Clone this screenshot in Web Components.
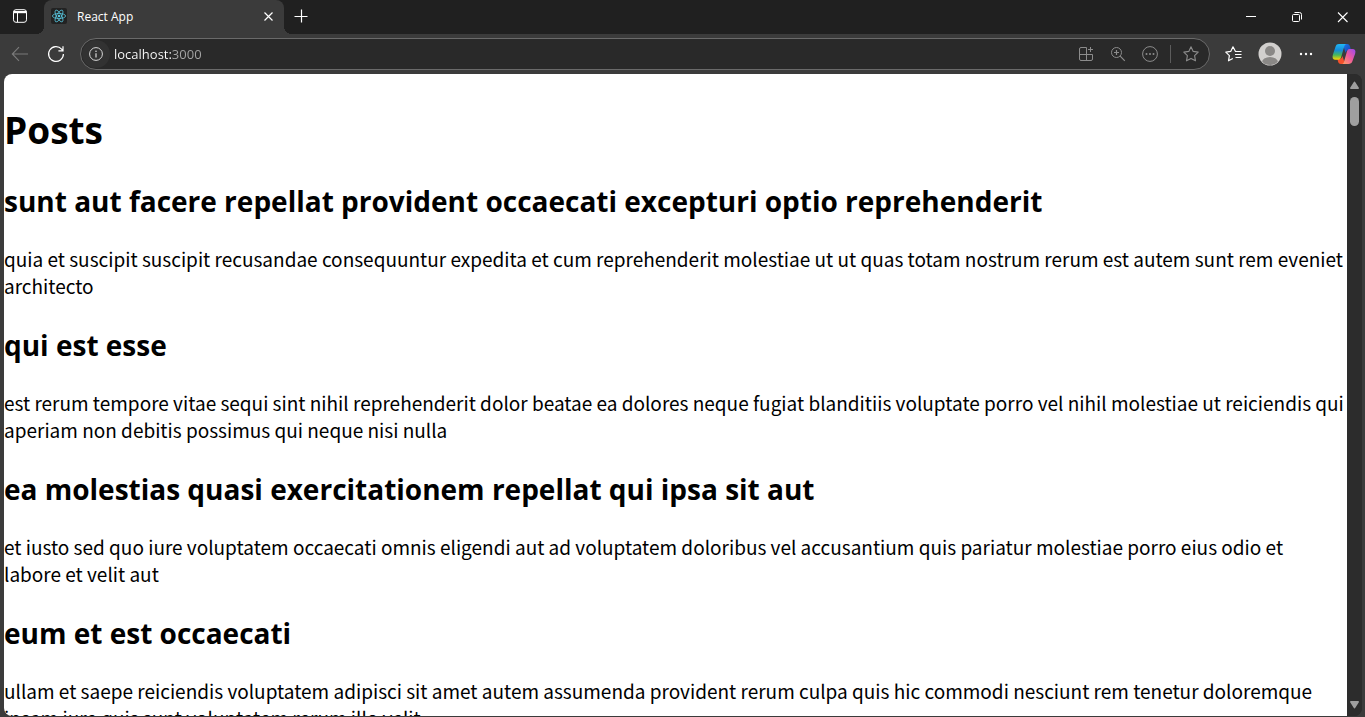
<!DOCTYPE html>
<html lang="en">
<head>
<meta charset="utf-8">
<meta name="viewport" content="width=device-width, initial-scale=1">
<title>React App</title>
<style>
html, body { margin: 0; height: 100%; }
body { font-family: "Open Sans", "Noto Sans", sans-serif; background: #3b3b3b; overflow: hidden; }
</style>
</head>
<body>
<browser-window>
  <tab-strip slot="tabs"><browser-tab>React App</browser-tab></tab-strip>
  <nav-toolbar slot="toolbar" address="localhost:3000"></nav-toolbar>
  <posts-page>
    <post-item><span slot="title">sunt aut facere repellat provident occaecati excepturi optio reprehenderit</span>quia et suscipit suscipit recusandae consequuntur expedita et cum reprehenderit molestiae ut ut quas totam nostrum rerum est autem sunt rem eveniet architecto</post-item>
    <post-item><span slot="title">qui est esse</span>est rerum tempore vitae sequi sint nihil reprehenderit dolor beatae ea dolores neque fugiat blanditiis voluptate porro vel nihil molestiae ut reiciendis qui aperiam non debitis possimus qui neque nisi nulla</post-item>
    <post-item><span slot="title">ea molestias quasi exercitationem repellat qui ipsa sit aut</span>et iusto sed quo iure voluptatem occaecati omnis eligendi aut ad voluptatem doloribus vel accusantium quis pariatur molestiae porro eius odio et <br>labore et velit aut</post-item>
    <post-item><span slot="title">eum et est occaecati</span>ullam et saepe reiciendis voluptatem adipisci sit amet autem assumenda provident rerum culpa quis hic commodi nesciunt rem tenetur doloremque ipsam iure quis sunt voluptatem rerum illo velit</post-item>
  </posts-page>
  <scroll-track slot="scroll"></scroll-track>
</browser-window>

<script>
const define = (name, html, setup) => customElements.define(name, class extends HTMLElement {
  constructor() {
    super();
    this.attachShadow({ mode: 'open' }).innerHTML = html;
  }
  connectedCallback() { if (setup) setup(this, this.shadowRoot); }
});

const buttonReset = `
  button { border: 0; padding: 0; margin: 0; background: none; color: inherit; display: grid; place-items: center; flex: none; }
  svg { display: block; fill: none; stroke: currentColor; }
`;

define('browser-window', `
  <style>
    :host { display: flex; flex-direction: column; height: 100vh; background: #3b3b3b; }
    main { flex: 1; min-height: 0; display: flex; margin: 0 3px 1px 4px; border-radius: 8px; overflow: hidden; background: #2c2c2c; }
  </style>
  <slot name="tabs"></slot>
  <slot name="toolbar"></slot>
  <main><slot></slot><slot name="scroll"></slot></main>`);

define('tab-strip', `
  <style>
    ${buttonReset}
    :host { display: flex; height: 34px; background: #202020; color: #fff; flex: none; }
    .menu { width: 40px; height: 32px; }
    .new { width: 34px; height: 32px; }
    .controls { display: flex; margin-left: auto; }
    .controls button { width: 46px; height: 34px; }
    ::slotted(browser-tab) { margin-left: 4px; }
  </style>
  <button class="menu" aria-label="Tab actions"><svg width="16" height="16" viewBox="0 0 16 16"><rect x="1.5" y="1.7" width="13" height="12.6" rx="2.5"/><path d="M1.5 3h13v2.2h-13z" fill="currentColor" stroke="none"/><path d="M5.5 5v9"/></svg></button>
  <slot></slot>
  <button class="new" aria-label="New tab"><svg width="14" height="14" viewBox="0 0 14 14"><path d="M7.5 .5v13M.5 7.5h13" stroke-width="1.2"/></svg></button>
  <div class="controls">
    <button aria-label="Minimize"><svg width="12" height="10"><path d="M2 4.500h10"/></svg></button>
    <button aria-label="Restore"><svg width="12" height="12" viewBox="0 0 12 12"><rect x="2.500" y="3.5" width="7" height="7" rx="1"/><path d="M4.500 1.500h5a2 2 0 0 1 2 2v5"/></svg></button>
    <button aria-label="Close"><svg width="12" height="12" viewBox="0 0 12 12"><path d="m2 1.500 9.500 9.500M11.500 1.500 2 11" stroke-width="1.1"/></svg></button>
  </div>`);

define('browser-tab', `
  <style>
    ${buttonReset}
    :host { position: relative; display: flex; align-items: center; box-sizing: border-box; width: 240px; height: 34px; padding: 0 8px 2px 7px; border-radius: 8px 8px 0 0; background: #3b3b3b; color: #fff; font-size: 12px; }
    :host::before, :host::after { content: ""; position: absolute; bottom: 0; width: 8px; height: 8px; }
    :host::before { right: 100%; background: radial-gradient(circle at 0 0, transparent 8px, #3b3b3b 8px); }
    :host::after { left: 100%; background: radial-gradient(circle at 100% 0, transparent 8px, #3b3b3b 8px); }
    .icon { background: #222; border-radius: 2px; color: #58c4dc; margin-right: 10px; }
    .title { flex: 1; white-space: nowrap; }
    button { width: 16px; height: 16px; }
  </style>
  <svg class="icon" width="16" height="16" viewBox="-8 -8 16 16" stroke-width=".8"><circle r="1.3" fill="currentColor" stroke="none"/><ellipse rx="6.6" ry="2.5"/><ellipse rx="6.6" ry="2.5" transform="rotate(60)"/><ellipse rx="6.6" ry="2.5" transform="rotate(120)"/></svg>
  <span class="title"><slot></slot></span>
  <button aria-label="Close tab"><svg width="10" height="10"><path d="m1.500 1.500 8 8M9.500 1.500l-8 8" stroke-width="1.2"/></svg></button>`);

define('nav-toolbar', `
  <style>
    ${buttonReset}
    :host { display: flex; align-items: center; height: 40px; color: #fff; flex: none; }
    .nav { width: 32px; height: 32px; margin-left: 4px; }
    .back { color: #7b7b7b; }
    form { flex: 1; min-width: 0; display: flex; align-items: center; box-sizing: border-box; height: 32px; margin-left: 8px; padding: 0 2px 0 1px; border: 1px solid #6a6a6a; border-radius: 16px; background: #292929; }
    .info { width: 28px; height: 28px; border-radius: 50%; background: #323232; color: #d8d8d8; }
    input { flex: 1; min-width: 0; height: 24px; margin: 0 0 0 4px; padding: 0; border: 0; outline: 0; font: 13px "Open Sans", "Noto Sans", sans-serif; color: transparent; background: linear-gradient(90deg, #fff 57px, #a6a6a6 57px); -webkit-background-clip: text; background-clip: text; }
    .act { width: 32px; height: 28px; color: #8c8c8c; }
    .rule { width: 1px; height: 18px; margin: 0 4px; background: #5c5c5c; }
    .tools { display: flex; margin: 0 5px 0 8px; gap: 4px; }
    .tools button { width: 32px; height: 32px; }
    .tools button:last-child { margin-left: 2px; }
  </style>
  <button class="nav back" aria-label="Back"><svg width="18" height="16" viewBox="0 0 18 16"><path d="M17 8H1.5M8 1.2 1.3 8 8 14.8" stroke-width="1.1"/></svg></button>
  <button class="nav" aria-label="Refresh"><svg width="18" height="18" viewBox="0 0 18 18"><path d="M16.4 9A7.4 7.4 0 1 1 14.6 4.2L16 5.8M16 1.2v4.7h-4.6" stroke-width="1.2"/></svg></button>
  <form>
    <button type="button" class="info" aria-label="Site information"><svg width="14" height="14" viewBox="0 0 14 14"><circle cx="7" cy="7" r="6.4"/><path d="M7 6.2v4.2" stroke-width="1.2"/><circle cx="7" cy="4.2" r=".8" fill="currentColor" stroke="none"/></svg></button>
    <input type="text" aria-label="Address" spellcheck="false">
    <button type="button" class="act" aria-label="Apps"><svg width="16" height="16" viewBox="0 0 16 16"><path d="M8.500 1.500H3A1.500 1.500 0 0 0 1.500 3v10A1.500 1.500 0 0 0 3 14.500h10a1.500 1.500 0 0 0 1.500-1.500V8.500h-13M8.500 1.500v13M12.500 1v5M10 3.500h5"/></svg></button>
    <button type="button" class="act" aria-label="Zoom"><svg width="16" height="16" viewBox="0 0 16 16"><circle cx="6.500" cy="6.500" r="5"/><path d="m10.200 10.200 4.600 4.600M6.500 4v5M4 6.500h5" stroke-width="1.2"/></svg></button>
    <button type="button" class="act" aria-label="More actions"><svg width="16" height="16" viewBox="0 0 16 16"><circle cx="8" cy="8" r="7.400"/><g fill="currentColor" stroke="none"><circle cx="4.500" cy="8" r="1"/><circle cx="8" cy="8" r="1"/><circle cx="11.500" cy="8" r="1"/></g></svg></button>
    <span class="rule"></span>
    <button type="button" class="act" aria-label="Add to favorites"><svg width="16" height="16" viewBox="0 0 16 16"><path d="m8 .8 2.200 4.600 5 .7-3.600 3.500.9 5.200L8 12.400l-4.500 2.400.9-5.200L.8 6.100l5-.7z" stroke-linejoin="round" stroke-width="1.100"/></svg></button>
  </form>
  <div class="tools">
    <button aria-label="Favorites"><svg width="18" height="16" viewBox="0 0 18 16" stroke-width="1.2"><path d="M16.500 5.500h-6L8 .8 5.700 5.400l-4.900.7 3.600 3.500-.9 5.200 4.300-2.300M10 8.500h6.500M10.500 11.500h6" stroke-linejoin="round"/></svg></button>
    <button aria-label="Profile"><svg width="24" height="24" viewBox="0 0 24 24" style="stroke:none"><defs><clipPath id="face"><circle cx="12" cy="12" r="11"/></clipPath></defs><circle cx="12" cy="12" r="11.500" fill="#d2d0ce"/><g clip-path="url(#face)" fill="#8a8886"><circle cx="12" cy="9" r="5"/><ellipse cx="12" cy="20.500" rx="8" ry="5.500"/></g></svg></button>
    <button aria-label="Settings"><svg width="14" height="4" style="stroke:none;fill:currentColor"><circle cx="2" cy="2" r="1.200"/><circle cx="7" cy="2" r="1.200"/><circle cx="12" cy="2" r="1.200"/></svg></button>
    <button aria-label="Copilot"><svg width="24" height="22" viewBox="0 0 24 22" style="stroke:none">
      <defs>
        <linearGradient id="a" x1="0" y1="0" x2="0" y2="1"><stop offset="0" stop-color="#20b8f5"/><stop offset=".4" stop-color="#168bd8"/><stop offset=".7" stop-color="#48b65a"/><stop offset="1" stop-color="#ffd500"/></linearGradient>
        <linearGradient id="b" x1="1" y1="0" x2="0" y2="1"><stop offset="0" stop-color="#9a48ef"/><stop offset=".5" stop-color="#ef5b9b"/><stop offset="1" stop-color="#ffa45c"/></linearGradient>
        <linearGradient id="c" x1="0" y1="0" x2="1" y2="1"><stop offset="0" stop-color="#1c75e8"/><stop offset="1" stop-color="#173eb0"/></linearGradient>
      </defs>
      <path d="M11 1h4c2 0 2.500 1 3 2.500L19 7h-2c-2 0-3 1-3.500 3z" fill="url(#c)"/>
      <path d="M13 21H9c-2 0-2.500-1-3-2.500L5.500 16H7c2 0 3-1 3.500-3z" fill="#f4512c"/>
      <path d="M7 1h7.500c-1.200.2-1.800 1-2.200 2.300L9.200 14c-.6 2-1.500 2.700-3.200 2.700H3.500C1 16.700 0 15 .8 12L3.500 3.700C4.200 1.700 5.200 1 7 1z" fill="url(#a)"/>
      <path d="M16.500 21H10c1.200-.2 1.600-1 2-2.300l3-10.400C15.600 6.500 16.500 6 18 6h2.500c2.500 0 3.500 1.500 2.700 4.500L20.500 18c-.8 2.200-2 3-4 3z" fill="url(#b)"/>
    </svg></button>
  </div>`,
  (host, root) => { root.querySelector('input').value = host.getAttribute('address'); });

define('posts-page', `
  <style>
    :host { display: block; flex: 1; min-width: 0; overflow: hidden; background: #fff; color: #000; }
    h1 { margin: 29px 0 25px; font-size: 37px; line-height: 53px; font-weight: 700; }
  </style>
  <h1>Posts</h1>
  <slot></slot>`);

define('post-item', `
  <style>
    :host { display: block; }
    h2 { margin: 0 0 24px; font-size: 28px; line-height: 40px; font-weight: 700; }
    p { margin: 0 0 26px; font-family: "Noto Sans CJK SC", "Open Sans", sans-serif; font-size: 19px; line-height: 27px; }
  </style>
  <h2><slot name="title"></slot></h2>
  <p><slot></slot></p>`);

define('scroll-track', `
  <style>
    :host { display: flex; flex-direction: column; align-items: center; width: 15px; flex: none; background: #2c2c2c; color: #9f9f9f; box-sizing: border-box; padding: 7px 0; }
    svg { display: block; fill: currentColor; }
    .thumb { width: 9px; height: 29px; margin: 8px 0 auto; border-radius: 5px; background: #9f9f9f; }
  </style>
  <svg width="9" height="8"><path d="M4.500 .5Q5 .5 5.500 1.500L9 7q0 1-1 1H1Q0 8 0 7L3.500 1.500Q4 .5 4.500 .5z"/></svg>
  <div class="thumb"></div>
  <svg width="9" height="8"><path d="M4.500 7.500Q5 7.500 5.500 6.500L9 1q0-1-1-1H1Q0 0 0 1L3.500 6.500Q4 7.500 4.500 7.500z"/></svg>`);
</script>
</body>
</html>
